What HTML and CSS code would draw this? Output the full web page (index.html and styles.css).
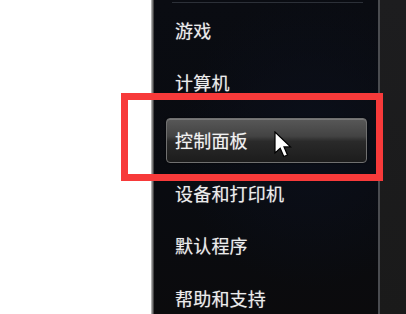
FILE: index.html
```html
<!DOCTYPE html>
<html lang="zh-CN">
<head>
<meta charset="utf-8">
<title>开始菜单</title>
<link rel="stylesheet" href="styles.css">
</head>
<body>
<div class="screen">
  <div class="blank"></div>
  <div class="edge"></div>
  <nav class="panel">
    <div class="sep-top"></div>
    <ul class="menu">
      <li class="item">游戏</li>
      <li class="item">计算机</li>
      <li class="item item-hover group-start">控制面板</li>
      <li class="item">设备和打印机</li>
      <li class="item">默认程序</li>
      <li class="item">帮助和支持</li>
    </ul>
  </nav>
  <div class="panel-border"></div>
  <div class="outside"></div>
  <div class="highlight"></div>
  <svg class="cursor" width="21" height="29" viewBox="0 0 21 29">
    <path d="M1 1 L1 22 L6.2 17.2 L9.8 25.5 L13.5 24 L10 15.9 L16.5 15.9 Z" fill="#ffffff" stroke="#000000" stroke-width="1.2" stroke-linejoin="miter"/>
  </svg>
</div>
</body>
</html>
```
FILE: styles.css
```css
html, body {
  margin: 0;
  padding: 0;
  width: 406px;
  height: 314px;
  overflow: hidden;
  background: #ffffff;
}
.screen {
  position: relative;
  display: flex;
  width: 406px;
  height: 314px;
  font-family: "Noto Sans CJK SC", "Noto Sans", sans-serif;
}
.blank {
  width: 151px;
  background: #ffffff;
  flex: none;
}
.edge {
  width: 3px;
  flex: none;
  background: linear-gradient(90deg, #c9c9c9 0%, #7a7a7a 50%, #2a2a2a 100%);
}
.panel {
  width: 224px;
  flex: none;
  background:
    radial-gradient(ellipse at 70% 45%, #0b0f1a 0%, rgba(11,15,26,0) 60%),
    linear-gradient(180deg, #0a0c12 0%, #090b10 60%, #0b0b0d 100%);
  padding-left: 12px;
  box-sizing: border-box;
}
.sep-top {
  height: 1px;
  margin-top: 2px;
  margin-left: 6px;
  width: 191px;
  background: #2c3038;
}
.menu {
  list-style: none;
  margin: 0;
  padding: 4px 0 0 0;
  display: flex;
  flex-direction: column;
  gap: 7.5px;
}
.item {
  height: 45px;
  width: 201px;
  box-sizing: border-box;
  padding-left: 8px;
  display: flex;
  align-items: center;
  color: #ececec;
  font-size: 18px;
  letter-spacing: 0.2px;
  text-shadow: 0 0 1px rgba(255,255,255,0.45);
  border: 1px solid transparent;
  border-radius: 4px;
}
.group-start {
  margin-top: 5.5px;
}
.item-hover {
  border-color: #707070;
  background: linear-gradient(180deg, #585858 0%, #434343 40%, #2a2a2a 52%, #1c1c1c 100%);
  box-shadow: inset 0 1px 0 rgba(255,255,255,0.2), 0 0 2px rgba(0,0,0,0.8);
  color: #f2f2f2;
}
.panel-border {
  width: 2px;
  flex: none;
  background: #4a4c50;
}
.outside {
  flex: 1;
  background: linear-gradient(180deg, #1d1d1f 0%, #1a1a1a 100%);
}
.highlight {
  position: absolute;
  left: 121px;
  top: 93px;
  width: 262px;
  height: 88px;
  box-sizing: border-box;
  border: 7px solid #f73a3a;
}
.cursor {
  position: absolute;
  left: 274px;
  top: 131px;
}
```
